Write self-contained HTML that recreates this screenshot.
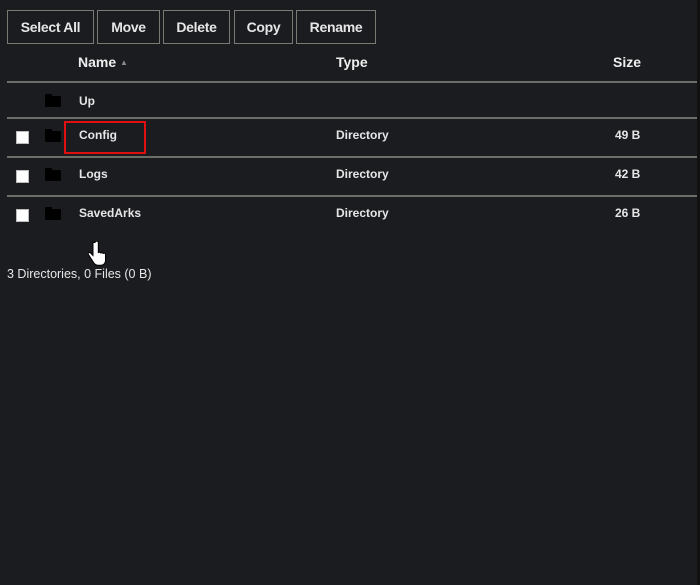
<!DOCTYPE html>
<html><head><meta charset="utf-8"><style>
*{box-sizing:border-box;margin:0;padding:0}
body{width:700px;height:585px;background:#1b1c20;font-family:"Liberation Sans",Arial,sans-serif;color:#e8e8e8;position:relative;overflow:hidden}
.edge{position:absolute;right:0;top:0;width:3px;height:585px;background:#111}
.btn{position:absolute;top:10px;height:34px;border:1px solid #7a7a72;background:#1b1c20;color:#e6e6e6;font-size:14px;font-weight:bold;letter-spacing:-0.3px;line-height:32px;text-align:center}
.h{position:absolute;top:54px;font-size:14px;font-weight:bold;color:#eee}
.line{position:absolute;left:7px;width:690px;height:2px;background:#6e6e68}
.t{position:absolute;font-size:12px;font-weight:bold;color:#e6e6e6}
.cb{position:absolute;left:16px;width:13px;height:13px;background:#fff;border:1px solid #bbb}
.fd{position:absolute;left:45px;width:16px;height:11px;background:#000;border-radius:1px}
.fd:before{content:"";position:absolute;left:0;top:-2px;width:7px;height:3px;background:#000;border-radius:1px 1px 0 0}
</style></head><body>
<div class="btn" style="left:7px;width:87px">Select All</div>
<div class="btn" style="left:97px;width:63px">Move</div>
<div class="btn" style="left:163px;width:67px">Delete</div>
<div class="btn" style="left:234px;width:59px">Copy</div>
<div class="btn" style="left:296px;width:80px">Rename</div>
<div class="h" style="left:78px">Name <span style="font-size:8px;color:#888;vertical-align:2px">▲</span></div>
<div class="h" style="left:336px">Type</div>
<div class="h" style="left:613px">Size</div>
<div class="line" style="top:81px"></div>
<div class="fd" style="top:96px"></div><div class="t" style="left:79px;top:94px">Up</div>
<div class="line" style="top:117px"></div>
<div class="cb" style="top:131px"></div><div class="fd" style="top:131px"></div>
<div style="position:absolute;left:64px;top:121px;width:82px;height:33px;border:2px solid #e01010"></div>
<div class="t" style="left:79px;top:128px">Config</div><div class="t" style="left:336px;top:128px">Directory</div><div class="t" style="left:615px;top:128px">49 B</div>
<div class="line" style="top:156px"></div>
<div class="cb" style="top:170px"></div><div class="fd" style="top:170px"></div>
<div class="t" style="left:79px;top:167px">Logs</div><div class="t" style="left:336px;top:167px">Directory</div><div class="t" style="left:615px;top:167px">42 B</div>
<div class="line" style="top:195px"></div>
<div class="cb" style="top:209px"></div><div class="fd" style="top:209px"></div>
<div class="t" style="left:79px;top:206px">SavedArks</div><div class="t" style="left:336px;top:206px">Directory</div><div class="t" style="left:615px;top:206px">26 B</div>
<svg style="position:absolute;left:87px;top:241px" width="20" height="27" viewBox="0 0 20 27"><path d="M6 1.5v13l-2.5-2.5c-1.2-1.2-3 0-2 1.7l4.5 7c1.2 2 2.5 3.5 5 3.5h3c3 0 4.5-2.3 4.5-5v-6c0-1.2-2-1.6-2.4-.4 0-1.2-2-1.6-2.4-.4 0-1.2-2-1.6-2.4-.4V1.5c0-1.8-3.3-1.8-3.3 0z" fill="#fff" stroke="#000" stroke-width="1"/></svg>
<div class="t" style="left:7px;top:267px;font-weight:normal;font-size:12.5px;color:#e6e6e6">3 Directories, 0 Files (0 B)</div>
<div class="edge"></div>
</body></html>
